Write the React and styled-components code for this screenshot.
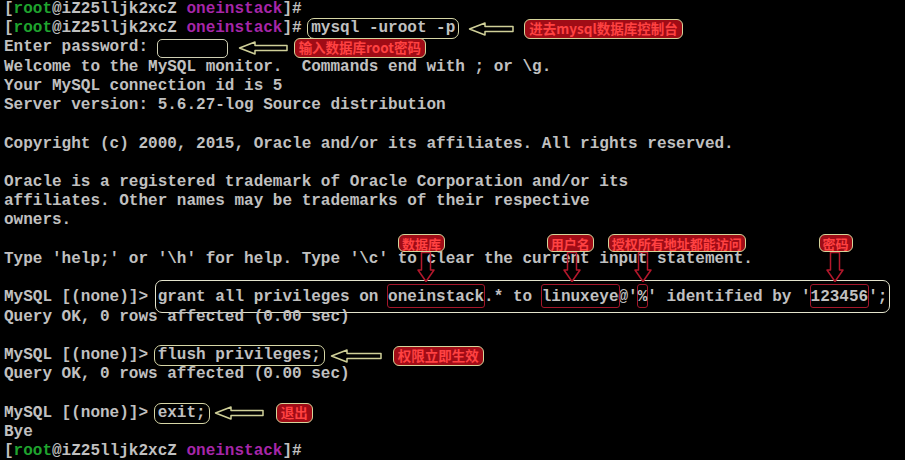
import React from 'react';
import styled, { createGlobalStyle } from 'styled-components';

const GlobalStyle = createGlobalStyle`
  html, body {
    margin: 0;
    padding: 0;
    background: #000;
  }
`;

const Screen = styled.div`
  width: 905px;
  height: 460px;
  overflow: hidden;
  box-sizing: border-box;
  padding: 0 0 0 4px;
  background: #000;
  color: #c0c0c0;
  font-family: "Liberation Mono", "Courier New", monospace;
  font-size: 16px;
  font-weight: 700;
`;

const Lines = styled.div`
  margin-top: 0;
`;

const Line = styled.div`
  display: flex;
  align-items: center;
  height: 19.22px;
  line-height: 19.22px;
  white-space: pre;
`;

const User = styled.span`
  color: #1fa32e;
`;

const Dir = styled.span`
  color: #a626a8;
`;

// outline drawn round a typed command
const Boxed = styled.span`
  border: 1px solid ${p => (p.$bright ? '#e4e4cc' : '#d6d6a6')};
  border-radius: 7px;
  padding: ${p => (p.$tall ? '7px 2px 4px' : '0 3px')};
  margin: ${p => (p.$tall ? '-8px -3px -5px' : '0 -4px')};
`;

const Blank = styled.span`
  width: 69px;
  height: 17px;
  margin-left: -1px;
  border: 1px solid #cfcfb4;
  border-radius: 5px;
`;

// red outline on a part of the grant statement
const Mark = styled.span`
  position: relative;
  border: 1px solid #a3162a;
  border-radius: 3px;
  padding: 3px 0 1px;
  margin: 0 -1px;
`;

const Tag = styled.span`
  display: inline-flex;
  align-items: center;
  height: 20px;
  box-sizing: border-box;
  padding: 0 4px;
  margin-left: ${p => p.$gap || 0}px;
  border: 1px solid #d4d49a;
  border-radius: 6px;
  background: #a00c16;
  color: #ff4242;
  font-family: "Noto Sans CJK SC", "Noto Sans", sans-serif;
  font-size: 13.5px;
  font-weight: 700;
  line-height: 1;
  white-space: nowrap;
`;

const FloatTag = styled(Tag)`
  position: absolute;
  top: -51px;
  left: ${p => p.$x}px;
  height: 18px;
  padding: 0 3px;
  font-size: 13px;
`;

const LeftArrowSvg = styled.svg`
  flex: none;
  margin-left: ${p => p.$gap}px;
`;

const DownArrowSvg = styled.svg`
  position: absolute;
  top: -33px;
  left: ${p => p.$x - 9}px;
`;

const LeftArrow = ({ gap, width = 48 }) => (
  <LeftArrowSvg $gap={gap} width={width} height="14" viewBox={`0 0 ${width} 14`}>
    <polygon
      points={`1.5,7 17,1 17,4.5 ${width - 1},4.5 ${width - 1},9.5 17,9.5 17,13`}
      fill="none"
      stroke="#cfcf98"
      strokeWidth="1.5"
      strokeLinejoin="round"
    />
  </LeftArrowSvg>
);

const DownArrow = ({ x }) => (
  <DownArrowSvg $x={x} width="18" height="30" viewBox="0 0 18 30">
    <polygon
      points="4.5,0.5 13.5,0.5 13.5,18 17,18 9,29.5 1,18 4.5,18"
      fill="none"
      stroke="#b3182c"
      strokeWidth="1.5"
      strokeLinejoin="round"
    />
  </DownArrowSvg>
);

const Callout = ({ children, text, tagX, arrowX }) => (
  <Mark>
    {children}
    <FloatTag $x={tagX}>{text}</FloatTag>
    <DownArrow x={arrowX} />
  </Mark>
);

const Prompt = () => (
  <>
    [<User>root</User>@iZ25lljk2xcZ <Dir>oneinstack</Dir>]#{' '}
  </>
);

export default function App() {
  return (
    <Screen>
      <GlobalStyle />
      <Lines>
        <Line><Prompt /></Line>
        <Line>
          <Prompt />
          <Boxed>mysql -uroot -p</Boxed>
          <LeftArrow gap={13} width={46} />
          <Tag $gap={10}>进去mysql数据库控制台</Tag>
        </Line>
        <Line>
          {'Enter password: '}
          <Blank />
          <LeftArrow gap={10} width={50} />
          <Tag $gap={6}>输入数据库root密码</Tag>
        </Line>
        <Line>{'Welcome to the MySQL monitor.  Commands end with ; or \\g.'}</Line>
        <Line>{'Your MySQL connection id is 5'}</Line>
        <Line>{'Server version: 5.6.27-log Source distribution'}</Line>
        <Line />
        <Line>{'Copyright (c) 2000, 2015, Oracle and/or its affiliates. All rights reserved.'}</Line>
        <Line />
        <Line>{'Oracle is a registered trademark of Oracle Corporation and/or its'}</Line>
        <Line>{'affiliates. Other names may be trademarks of their respective'}</Line>
        <Line>{'owners.'}</Line>
        <Line />
        <Line>{"Type 'help;' or '\\h' for help. Type '\\c' to clear the current input statement."}</Line>
        <Line />
        <Line>
          {'MySQL [(none)]> '}
          <Boxed $tall $bright>
            {'grant all privileges on '}
            <Callout text="数据库" tagX={10} arrowX={38}>oneinstack</Callout>
            {'.* to '}
            <Callout text="用户名" tagX={5} arrowX={30}>linuxeye</Callout>
            {"@'"}
            <Callout text="授权所有地址都能访问" tagX={-30} arrowX={5}>%</Callout>
            {"' identified by '"}
            <Callout text="密码" tagX={8} arrowX={24}>123456</Callout>
            {"';"}
          </Boxed>
        </Line>
        <Line>{'Query OK, 0 rows affected (0.00 sec)'}</Line>
        <Line />
        <Line>
          {'MySQL [(none)]> '}
          <Boxed>flush privileges;</Boxed>
          <LeftArrow gap={9} width={52} />
          <Tag $gap={11}>权限立即生效</Tag>
        </Line>
        <Line>{'Query OK, 0 rows affected (0.00 sec)'}</Line>
        <Line />
        <Line>
          {'MySQL [(none)]> '}
          <Boxed>exit;</Boxed>
          <LeftArrow gap={8} width={50} />
          <Tag $gap={12}>退出</Tag>
        </Line>
        <Line>{'Bye'}</Line>
        <Line><Prompt /></Line>
      </Lines>
    </Screen>
  );
}
